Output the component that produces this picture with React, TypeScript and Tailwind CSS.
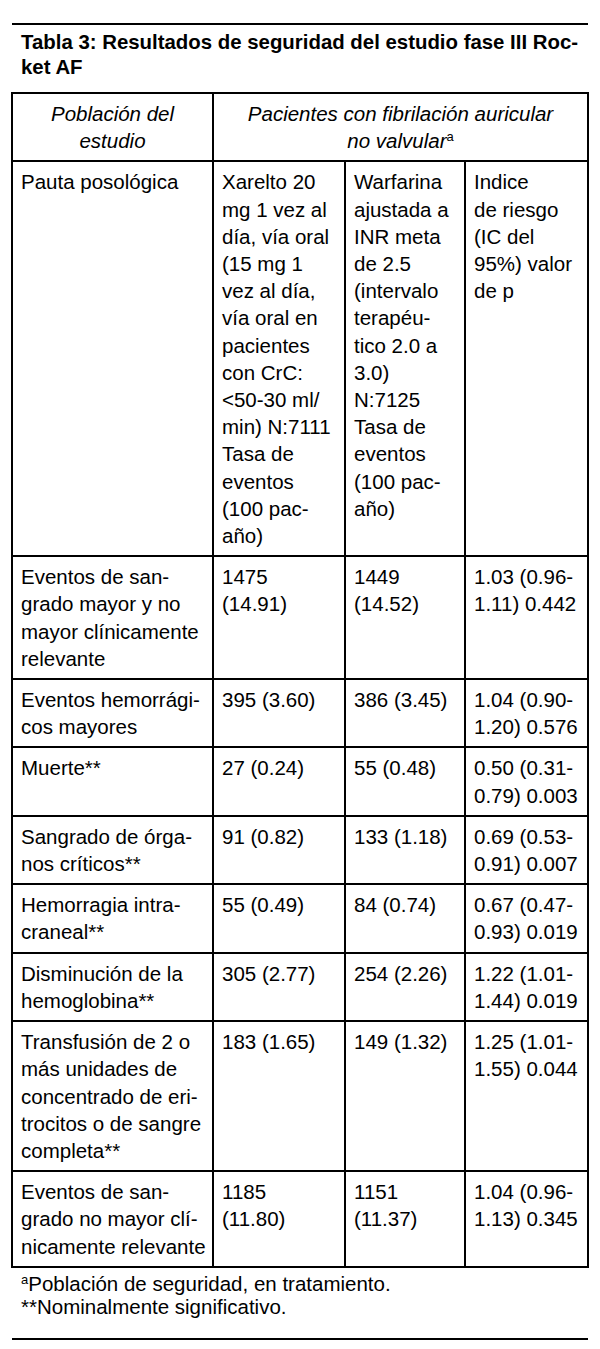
import React from "react";

type Row = { label: string[]; a: string[]; b: string[]; c: string[] };

const rows: Row[] = [
  {
    label: ["Eventos de san-", "grado mayor y no", "mayor clínicamente", "relevante"],
    a: ["1475", "(14.91)"],
    b: ["1449", "(14.52)"],
    c: ["1.03 (0.96-", "1.11) 0.442"],
  },
  {
    label: ["Eventos hemorrági-", "cos mayores"],
    a: ["395 (3.60)"],
    b: ["386 (3.45)"],
    c: ["1.04 (0.90-", "1.20) 0.576"],
  },
  {
    label: ["Muerte**"],
    a: ["27 (0.24)"],
    b: ["55 (0.48)"],
    c: ["0.50 (0.31-", "0.79) 0.003"],
  },
  {
    label: ["Sangrado de órga-", "nos críticos**"],
    a: ["91 (0.82)"],
    b: ["133 (1.18)"],
    c: ["0.69 (0.53-", "0.91) 0.007"],
  },
  {
    label: ["Hemorragia intra-", "craneal**"],
    a: ["55 (0.49)"],
    b: ["84 (0.74)"],
    c: ["0.67 (0.47-", "0.93) 0.019"],
  },
  {
    label: ["Disminución de la", "hemoglobina**"],
    a: ["305 (2.77)"],
    b: ["254 (2.26)"],
    c: ["1.22 (1.01-", "1.44) 0.019"],
  },
  {
    label: [
      "Transfusión de 2 o",
      "más unidades de",
      "concentrado de eri-",
      "trocitos o de sangre",
      "completa**",
    ],
    a: ["183 (1.65)"],
    b: ["149 (1.32)"],
    c: ["1.25 (1.01-", "1.55) 0.044"],
  },
  {
    label: ["Eventos de san-", "grado no mayor clí-", "nicamente relevante"],
    a: ["1185", "(11.80)"],
    b: ["1151", "(11.37)"],
    c: ["1.04 (0.96-", "1.13) 0.345"],
  },
];

const pauta = {
  label: ["Pauta posológica"],
  a: [
    "Xarelto 20",
    "mg 1 vez al",
    "día, vía oral",
    "(15 mg 1",
    "vez al día,",
    "vía oral en",
    "pacientes",
    "con CrC:",
    "<50-30 ml/",
    "min) N:7111",
    "Tasa de",
    "eventos",
    "(100 pac-",
    "año)",
  ],
  b: [
    "Warfarina",
    "ajustada a",
    "INR meta",
    "de 2.5",
    "(intervalo",
    "terapéu-",
    "tico 2.0 a",
    "3.0)",
    "N:7125",
    "Tasa de",
    "eventos",
    "(100 pac-",
    "año)",
  ],
  c: ["Indice", "de riesgo", "(IC del", "95%) valor", "de p"],
};

function Lines({ lines }: { lines: string[] }) {
  return (
    <>
      {lines.map((l, i) => (
        <span key={i} className="block">
          {l}
        </span>
      ))}
    </>
  );
}

const td =
  "border-2 border-black align-top pt-[6px] pb-[6px] pl-[8px] pr-[2px] whitespace-nowrap";

function BodyRow({ r }: { r: Row }) {
  return (
    <tr>
      <td className={td}>
        <Lines lines={r.label} />
      </td>
      <td className={td}>
        <Lines lines={r.a} />
      </td>
      <td className={td}>
        <Lines lines={r.b} />
      </td>
      <td className={td}>
        <Lines lines={r.c} />
      </td>
    </tr>
  );
}

export default function App() {
  return (
    <div className="w-[600px] min-h-[1349px] bg-white text-black font-['Liberation_Sans',Arial,sans-serif] pt-[23px]">
      <div className="ml-[12px] w-[576px] h-[2px] bg-black" />
      <h1 className="mt-[5px] pl-[21px] text-[20.4px] leading-[25px] font-bold">
        <span className="block">Tabla 3: Resultados de seguridad del estudio fase III Roc-</span>
        <span className="block">ket AF</span>
      </h1>
      <table className="mt-[12px] ml-[11px] w-[576px] table-fixed border-collapse text-[20.5px] leading-[27.2px]">
        <colgroup>
          <col className="w-[201px]" />
          <col className="w-[132px]" />
          <col className="w-[120px]" />
          <col className="w-[123px]" />
        </colgroup>
        <tbody>
          <tr>
            <td className="border-2 border-black align-top pt-[6px] pb-[6px] italic text-center">
              <span className="block">Población del</span>
              <span className="block">estudio</span>
            </td>
            <td colSpan={3} className="border-2 border-black align-top pt-[6px] pb-[6px] italic text-center">
              <span className="block">Pacientes con fibrilación auricular</span>
              <span className="block">
                no valvular
                <span className="relative -top-[7px] not-italic text-[13px] leading-none">a</span>
              </span>
            </td>
          </tr>
          <BodyRow r={pauta} />
          {rows.map((r, i) => (
            <BodyRow key={i} r={r} />
          ))}
        </tbody>
      </table>
      <div className="mt-[4px] pl-[21px] text-[20.5px] leading-[23px]">
        <p>
          <span className="relative -top-[7px] text-[13px] leading-none">a</span>
          Población de seguridad, en tratamiento.
        </p>
        <p>**Nominalmente significativo.</p>
      </div>
      <div className="mt-[20px] ml-[12px] w-[576px] h-[2px] bg-black" />
    </div>
  );
}
